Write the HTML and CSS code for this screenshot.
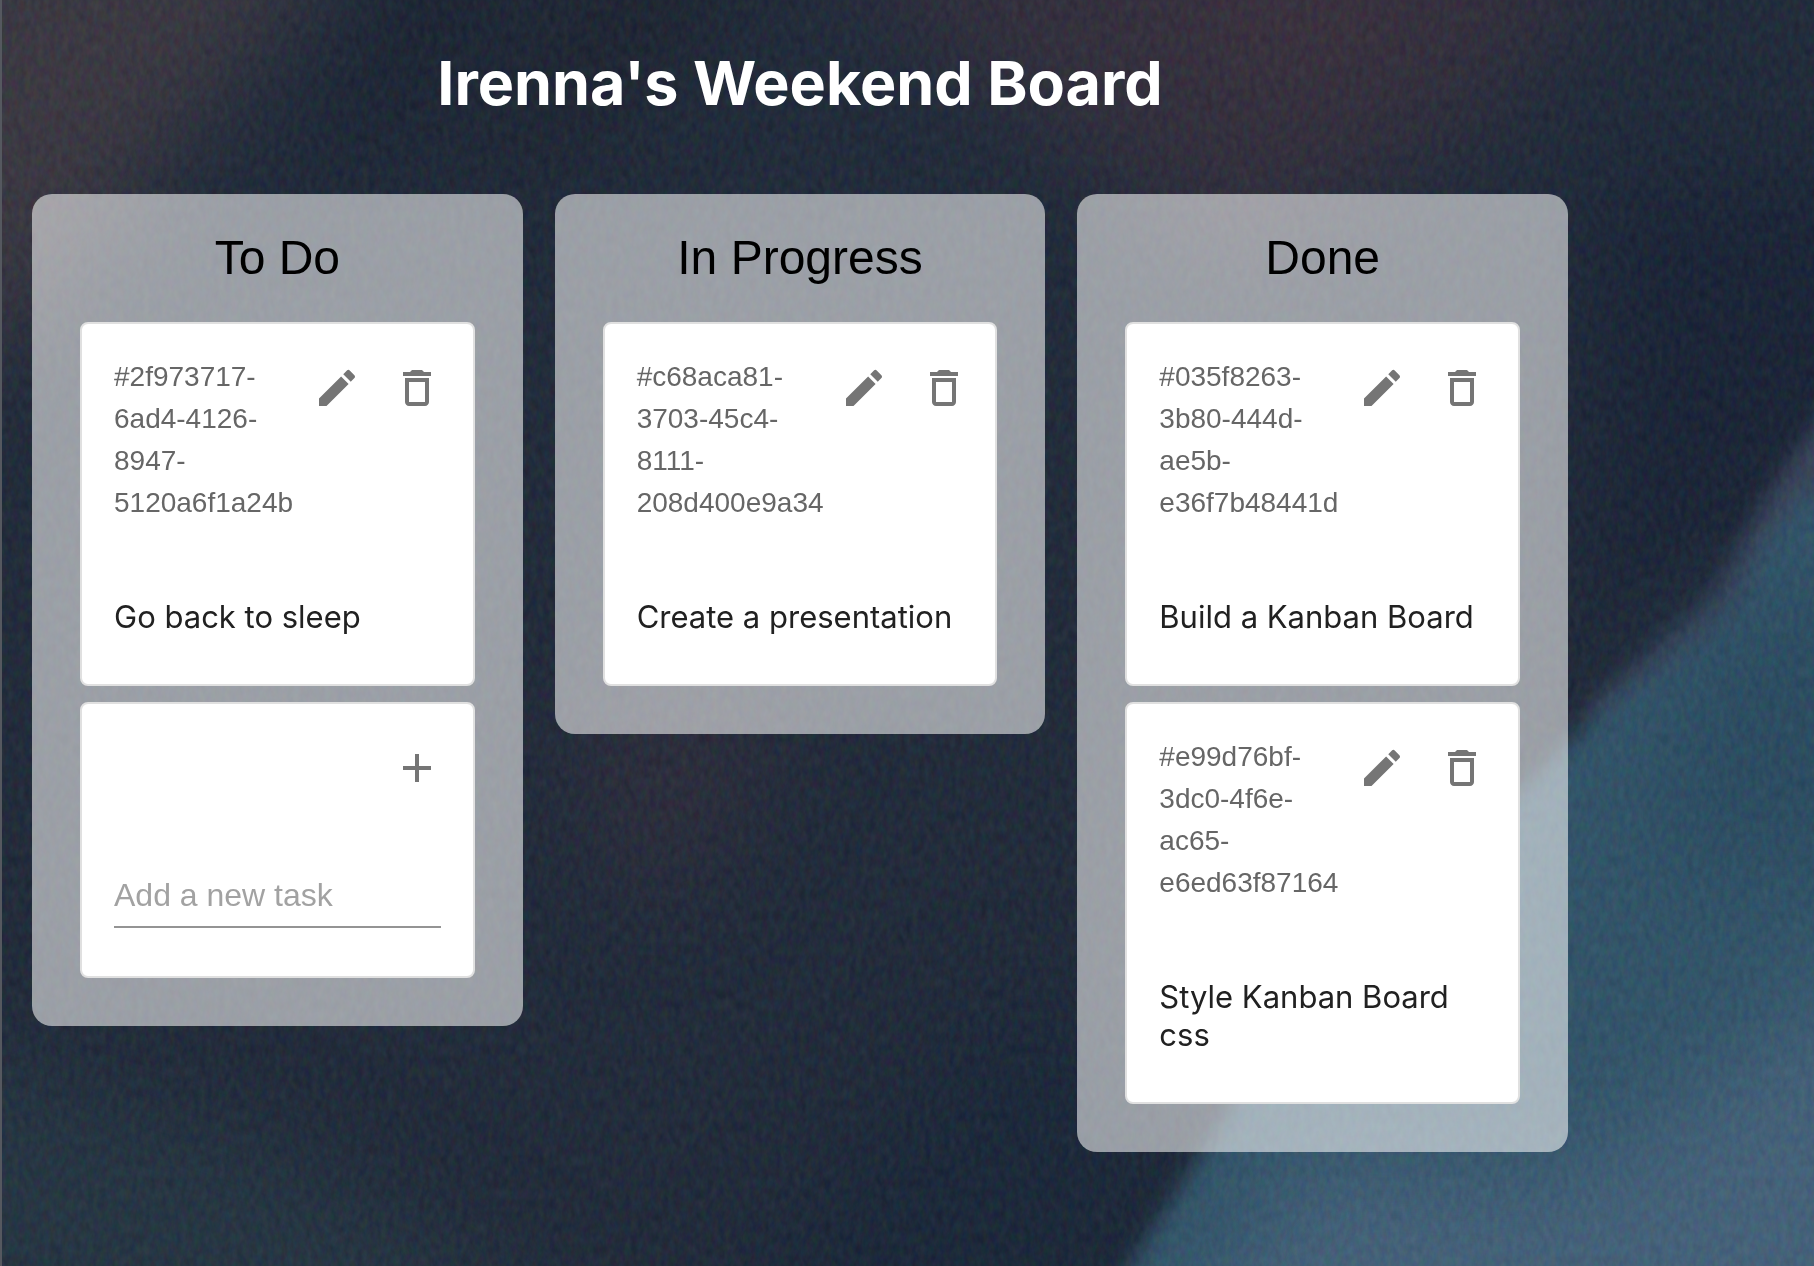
FILE: index.html
```html
<!DOCTYPE html>
<html lang="en">
<head>
    <meta charset="UTF-8">
    <meta name="viewport" content="width=device-width, initial-scale=1.0">
    <title>Irenna's Weekend Board</title>
    <link rel="stylesheet" href="styles.css">
</head>
<body>
    <!-- Painted canvas backdrop -->
    <svg class="backdrop" viewBox="0 0 1814 1266" preserveAspectRatio="xMidYMid slice" aria-hidden="true">
        <defs>
            <filter id="soft" x="-30%" y="-30%" width="160%" height="160%" color-interpolation-filters="sRGB">
                <feGaussianBlur stdDeviation="50"/>
            </filter>
            <filter id="edge" x="-10%" y="-10%" width="120%" height="120%" color-interpolation-filters="sRGB">
                <feGaussianBlur stdDeviation="10"/>
            </filter>
            <filter id="grain" x="0" y="0" width="100%" height="100%" color-interpolation-filters="sRGB">
                <feTurbulence type="fractalNoise" baseFrequency="0.16 0.09" numOctaves="3" seed="4"/>
                <feColorMatrix values="1.6 0 0 0 -0.3  0 1.6 0 0 -0.3  0 0 1.6 0 -0.3  0 0 0 0 1"/>
            </filter>
        </defs>
        <rect width="1814" height="1266" fill="#1d2737"/>
        <g filter="url(#soft)">
            <path d="M-80 -80H360L60 280L-80 420Z" fill="#38353f"/>
            <path d="M420 -80H560L400 140L300 200Z" fill="#171f2e"/>
            <path d="M620 -80H800L560 160L460 180Z" fill="#1a202d"/>
            <path d="M800 -80H1640L1480 120L1240 260L960 60Z" fill="#302c3a"/>
            <path d="M1080 -80H1500L1300 90Z" fill="#382e3b"/>
            <path d="M560 700H800L700 880L620 900Z" fill="#292a39"/>
            <path d="M-80 1040L300 1160L600 1340H-80Z" fill="#223240"/>
            <path d="M1600 180H1900V380L1600 640Z" fill="#162033"/>
            <path d="M1000 1000L1180 1060L1120 1340H700Z" fill="#172436"/>
        </g>
        <g filter="url(#edge)">
            <path d="M1860 360L1770 490L1710 600L1640 660L1571 720L1660 700L1780 580L1860 500Z" fill="#354158"/>
            <path d="M1860 470L1800 500L1763 544L1737 612L1675 661L1623 695L1571 739L1524 788L1400 900L1300 1000L1223 1120L1192 1169L1130 1266L1080 1340H1900V470Z" fill="#2f5268"/>
        </g>
        <g filter="url(#soft)">
            <path d="M1300 1160L1560 1180L1900 960V1360H1180Z" fill="#426079"/>
            <path d="M1700 640L1900 560V860L1640 880Z" fill="#28495f"/>
        </g>
        <rect class="grain" width="1814" height="1266" filter="url(#grain)"/>
    </svg>

    <main class="board">
        <h1>Irenna's Weekend Board</h1>

        <div class="columns">
            <!-- To Do -->
            <section class="column">
                <h2>To Do</h2>
                <div class="cards">
                    <article class="card">
                        <div class="card-header">
                            <span class="card-id">#2f973717-6ad4-4126-8947-5120a6f1a24b</span>
                            <div class="card-actions">
                                <button type="button" aria-label="Edit task">
                                    <svg viewBox="0 0 24 24"><path d="M3 17.25V21h3.75L17.81 9.94l-3.75-3.75L3 17.25zM20.71 7.04c.39-.39.39-1.02 0-1.41l-2.34-2.34a.9959.9959 0 0 0-1.41 0l-1.83 1.83 3.75 3.75 1.83-1.83z"/></svg>
                                </button>
                                <button type="button" aria-label="Delete task">
                                    <svg viewBox="0 0 24 24"><path d="M6 19c0 1.1.9 2 2 2h8c1.1 0 2-.9 2-2V7H6v12zM8 9h8v10H8V9zm7.5-5l-1-1h-5l-1 1H5v2h14V4z"/></svg>
                                </button>
                            </div>
                        </div>
                        <div class="card-content">
                            <p>Go back to sleep</p>
                        </div>
                    </article>
                    <form class="card">
                        <div class="card-header">
                            <div class="card-actions">
                                <button type="button" aria-label="Add task">
                                    <svg viewBox="0 0 24 24"><path d="M19 13h-6v6h-2v-6H5v-2h6V5h2v6h6v2z"/></svg>
                                </button>
                            </div>
                        </div>
                        <div class="card-content">
                            <input type="text" placeholder="Add a new task" aria-label="Add a new task">
                        </div>
                    </form>
                </div>
            </section>

            <!-- In Progress -->
            <section class="column">
                <h2>In Progress</h2>
                <div class="cards">
                    <article class="card">
                        <div class="card-header">
                            <span class="card-id">#c68aca81-3703-45c4-8111-208d400e9a34</span>
                            <div class="card-actions">
                                <button type="button" aria-label="Edit task">
                                    <svg viewBox="0 0 24 24"><path d="M3 17.25V21h3.75L17.81 9.94l-3.75-3.75L3 17.25zM20.71 7.04c.39-.39.39-1.02 0-1.41l-2.34-2.34a.9959.9959 0 0 0-1.41 0l-1.83 1.83 3.75 3.75 1.83-1.83z"/></svg>
                                </button>
                                <button type="button" aria-label="Delete task">
                                    <svg viewBox="0 0 24 24"><path d="M6 19c0 1.1.9 2 2 2h8c1.1 0 2-.9 2-2V7H6v12zM8 9h8v10H8V9zm7.5-5l-1-1h-5l-1 1H5v2h14V4z"/></svg>
                                </button>
                            </div>
                        </div>
                        <div class="card-content">
                            <p>Create a presentation</p>
                        </div>
                    </article>
                </div>
            </section>

            <!-- Done -->
            <section class="column">
                <h2>Done</h2>
                <div class="cards">
                    <article class="card">
                        <div class="card-header">
                            <span class="card-id">#035f8263-3b80-444d-ae5b-e36f7b48441d</span>
                            <div class="card-actions">
                                <button type="button" aria-label="Edit task">
                                    <svg viewBox="0 0 24 24"><path d="M3 17.25V21h3.75L17.81 9.94l-3.75-3.75L3 17.25zM20.71 7.04c.39-.39.39-1.02 0-1.41l-2.34-2.34a.9959.9959 0 0 0-1.41 0l-1.83 1.83 3.75 3.75 1.83-1.83z"/></svg>
                                </button>
                                <button type="button" aria-label="Delete task">
                                    <svg viewBox="0 0 24 24"><path d="M6 19c0 1.1.9 2 2 2h8c1.1 0 2-.9 2-2V7H6v12zM8 9h8v10H8V9zm7.5-5l-1-1h-5l-1 1H5v2h14V4z"/></svg>
                                </button>
                            </div>
                        </div>
                        <div class="card-content">
                            <p>Build a Kanban Board</p>
                        </div>
                    </article>
                    <article class="card">
                        <div class="card-header">
                            <span class="card-id">#e99d76bf-3dc0-4f6e-ac65-e6ed63f87164</span>
                            <div class="card-actions">
                                <button type="button" aria-label="Edit task">
                                    <svg viewBox="0 0 24 24"><path d="M3 17.25V21h3.75L17.81 9.94l-3.75-3.75L3 17.25zM20.71 7.04c.39-.39.39-1.02 0-1.41l-2.34-2.34a.9959.9959 0 0 0-1.41 0l-1.83 1.83 3.75 3.75 1.83-1.83z"/></svg>
                                </button>
                                <button type="button" aria-label="Delete task">
                                    <svg viewBox="0 0 24 24"><path d="M6 19c0 1.1.9 2 2 2h8c1.1 0 2-.9 2-2V7H6v12zM8 9h8v10H8V9zm7.5-5l-1-1h-5l-1 1H5v2h14V4z"/></svg>
                                </button>
                            </div>
                        </div>
                        <div class="card-content">
                            <p>Style Kanban Board css</p>
                        </div>
                    </article>
                </div>
            </section>
        </div>
    </main>
</body>
</html>
```

FILE: styles.css
```css
* {
    box-sizing: border-box;
}
body {
    margin: 0;
    min-height: 100vh;
    font-family: "Liberation Sans", Arial, sans-serif;
    background-color: #1e2838;
    box-shadow: inset 2px 0 #55585f;
}
.backdrop {
    position: fixed;
    inset: 0;
    width: 100%;
    height: 100%;
    z-index: -1;
}
.grain {
    opacity: 0.06;
}
.board {
    max-width: 1600px;
    padding: 44px 32px;
}
h1 {
    margin: 0 0 72px;
    font-family: Inter, sans-serif;
    font-size: 61px;
    line-height: 78px;
    text-align: center;
    color: white;
}
.columns {
    display: grid;
    grid-template-columns: repeat(3, minmax(0, 1fr));
    align-items: start;
    gap: 32px;
}
.column {
    padding: 32px 48px 48px;
    border-radius: 20px;
    background: rgba(255, 255, 255, 0.55);
}
.column h2 {
    margin: 0 0 32px;
    font-size: 48px;
    font-weight: normal;
    line-height: 64px;
    text-align: center;
}
.cards {
    display: flex;
    flex-direction: column;
    gap: 16px;
}
.card {
    border: 2px solid #e0e0e0;
    border-radius: 8px;
    background: white;
    overflow: hidden;
}
.card-header {
    display: flex;
    align-items: flex-start;
    padding: 32px;
}
.card-id {
    flex: 1 1 0;
    font-size: 28px;
    line-height: 42px;
    color: #666;
}
.card-actions {
    display: flex;
    flex: none;
    margin: -8px -16px -8px auto;
}
.card-actions button {
    padding: 16px;
    border: none;
    border-radius: 50%;
    background: none;
    color: #757575;
    cursor: pointer;
}
.card-actions button:hover {
    background: #f5f5f5;
}
.card-actions svg {
    display: block;
    width: 48px;
    height: 48px;
    fill: currentColor;
}
.card-content {
    padding: 32px 32px 48px;
}
.card-content p {
    margin: 0;
    padding-top: 10px;
    font-family: Inter, sans-serif;
    font-size: 31px;
    line-height: 38px;
    color: #212121;
}
.card-content input {
    display: block;
    width: 100%;
    height: 64px;
    padding: 12px 0;
    border: none;
    border-bottom: 2px solid #949494;
    border-radius: 0;
    outline: none;
    background: none;
    font-family: inherit;
    font-size: 32px;
    color: #212121;
}
.card-content input::placeholder {
    color: #a2a2a2;
}
```
